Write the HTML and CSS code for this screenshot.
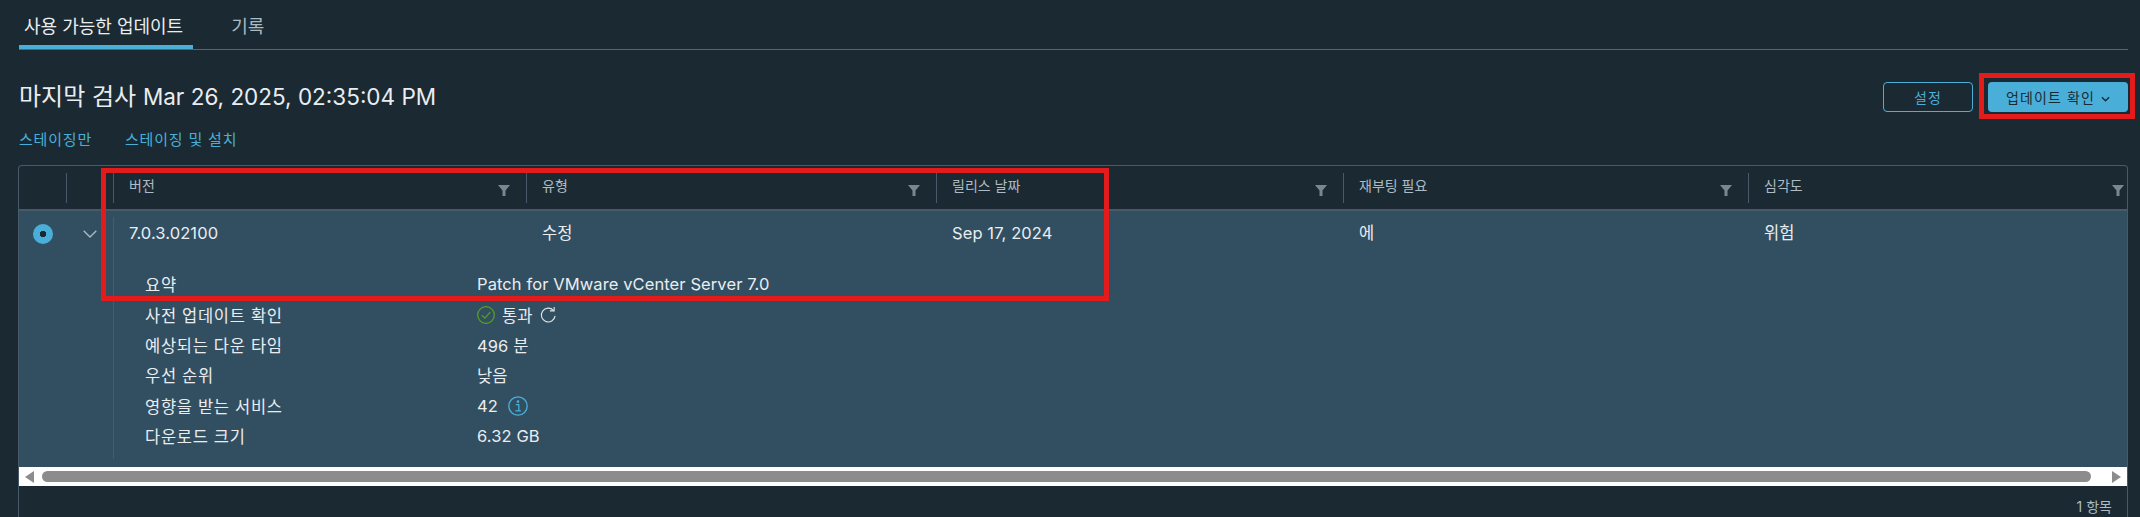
FILE: index.html
```html
<!DOCTYPE html>
<html lang="ko">
<head>
    <meta charset="UTF-8">
    <meta name="viewport" content="width=device-width, initial-scale=1.0">
    <title>사용 가능한 업데이트</title>
    <link rel="stylesheet" href="styles.css">
</head>
<body>
    <nav class="tabs">
        <a class="tab active">사용 가능한 업데이트</a>
        <a class="tab">기록</a>
    </nav>

    <div class="title-row">
        <h1 class="title">마지막 검사 <span class="title-date">Mar 26, 2025, 02:35:04 PM</span></h1>
        <div class="actions">
            <button type="button" class="btn btn-outline">설정</button>
            <button type="button" class="btn btn-primary">업데이트 확인
                <svg class="btn-caret" viewBox="0 0 10 6" width="9" height="6"><path d="M1 1l4 4 4-4" fill="none" stroke="#1b2a32" stroke-width="1.5"/></svg>
            </button>
        </div>
    </div>

    <div class="links">
        <a>스테이징만</a>
        <a>스테이징 및 설치</a>
    </div>

    <div class="grid">
        <div class="grid-head">
            <div class="head-cell head-radio"></div>
            <div class="head-cell head-expand"></div>
            <div class="head-cell col-a">버전<svg class="filter" viewBox="0 0 12 11"><path d="M0 0h12L7.5 5.5V11h-3V5.5z"/></svg></div>
            <div class="head-cell col-b">유형<svg class="filter" viewBox="0 0 12 11"><path d="M0 0h12L7.5 5.5V11h-3V5.5z"/></svg></div>
            <div class="head-cell col-c">릴리스 날짜<svg class="filter" viewBox="0 0 12 11"><path d="M0 0h12L7.5 5.5V11h-3V5.5z"/></svg></div>
            <div class="head-cell col-d">재부팅 필요<svg class="filter" viewBox="0 0 12 11"><path d="M0 0h12L7.5 5.5V11h-3V5.5z"/></svg></div>
            <div class="head-cell col-e">심각도<svg class="filter" viewBox="0 0 12 11"><path d="M0 0h12L7.5 5.5V11h-3V5.5z"/></svg></div>
        </div>

        <div class="grid-row">
            <div class="row-radio"><span class="radio"></span></div>
            <div class="row-expand">
                <svg viewBox="0 0 14 8" width="14" height="8"><path d="M.7.7L7 7l6.300-6.300" fill="none" stroke="#adbbc4" stroke-width="1.300"/></svg>
            </div>
            <div class="row-body">
                <div class="row-main">
                    <div class="cell col-a">7.0.3.02100</div>
                    <div class="cell col-b">수정</div>
                    <div class="cell col-c">Sep 17, 2024</div>
                    <div class="cell col-d">에</div>
                    <div class="cell col-e">위험</div>
                </div>
                <dl class="details">
                    <dt>요약</dt>
                    <dd>Patch for VMware vCenter Server 7.0</dd>
                    <dt>사전 업데이트 확인</dt>
                    <dd>
                        <svg class="ico" viewBox="0 0 18 18" width="18" height="18"><circle cx="9" cy="9" r="8.300" fill="none" stroke="#5aa220" stroke-width="1.200"/><path d="M4.800 9.200l3 3 5.500-6" fill="none" stroke="#5aa220" stroke-width="1.100"/></svg>
                        <span class="pass">통과</span>
                        <svg class="ico" viewBox="0 0 18 18" width="17" height="18"><path d="M14.200 4.200A7.300 7.300 0 1 0 16 10" fill="none" stroke="#dfe5e8" stroke-width="1.200"/><path d="M10.500 4.700h4.500V.500" fill="none" stroke="#dfe5e8" stroke-width="1.200"/></svg>
                    </dd>
                    <dt>예상되는 다운 타임</dt>
                    <dd>496 분</dd>
                    <dt>우선 순위</dt>
                    <dd>낮음</dd>
                    <dt>영향을 받는 서비스</dt>
                    <dd>42
                        <svg class="ico ico-info" viewBox="0 0 20 20" width="20" height="20"><circle cx="10" cy="10" r="9.200" fill="none" stroke="#49afd9" stroke-width="1.300"/><circle cx="10" cy="5.600" r="1.300" fill="#49afd9"/><path d="M7.800 8.700h3v6M7.300 14.900h5.600" fill="none" stroke="#49afd9" stroke-width="1.300"/></svg>
                    </dd>
                    <dt>다운로드 크기</dt>
                    <dd>6.32 GB</dd>
                </dl>
            </div>
        </div>

        <div class="scrollbar">
            <svg viewBox="0 0 9 12" width="9" height="12"><path d="M9 0v12L0 6z" fill="#8c8c8c"/></svg>
            <div class="thumb"></div>
            <svg viewBox="0 0 9 12" width="9" height="12"><path d="M0 0v12l9-6z" fill="#8c8c8c"/></svg>
        </div>

        <div class="grid-foot">1 항목</div>
    </div>

    <!-- annotation boxes -->
    <div class="mark mark-table"></div>
    <div class="mark mark-button"></div>
</body>
</html>
```

FILE: styles.css
```css
* {
    margin: 0;
    padding: 0;
    box-sizing: border-box;
}

body {
    position: relative;
    height: 517px;
    overflow: hidden;
    padding: 0 12px 0 18px;
    display: flex;
    flex-direction: column;
    background-color: #1b2a32;
    color: #eaedf0;
    font-family: Inter, "Noto Sans CJK KR", sans-serif;
    font-size: 16.5px;
}

/* tabs */
.tabs {
    display: flex;
    gap: 33px;
    height: 50px;
    margin-left: 1px;
    border-bottom: 1px solid #566570;
    flex-shrink: 0;
}
.tab {
    padding: 13px 10px 0 5px;
    height: 49px;
    font-size: 18px;
    line-height: 28px;
    color: #acbac3;
}
.tab.active {
    color: #eaedf0;
    border-bottom: 4px solid #49afd9;
}

/* title */
.title-row {
    display: flex;
    justify-content: space-between;
    align-items: center;
    height: 30px;
    margin-top: 32px;
}
.title {
    margin-left: 1px;
    font-size: 24px;
    font-weight: 400;
    line-height: 30px;
    white-space: nowrap;
}
.title-date {
    font-size: 22.5px;
}
.actions {
    display: flex;
    gap: 15px;
}
.btn {
    height: 30px;
    border-radius: 4px;
    font-family: inherit;
    font-size: 14px;
    letter-spacing: 1.100px;
}
.btn-outline {
    width: 90px;
    background: transparent;
    border: 1px solid #49afd9;
    color: #49afd9;
}
.btn-primary {
    width: 140px;
    background: #49afd9;
    border: none;
    color: #1b2a32;
}
.btn-caret {
    margin-left: 1px;
    vertical-align: 1px;
}

.links {
    display: flex;
    gap: 33px;
    height: 20px;
    margin: 18px 0 15px 1px;
    font-size: 15px;
    line-height: 20px;
    letter-spacing: 0.8px;
    color: #49afd9;
}

/* datagrid */
.grid {
    flex: 1;
    min-height: 0;
    display: flex;
    flex-direction: column;
    border: 1px solid #485969;
    border-bottom: none;
    border-radius: 4px 4px 0 0;
}
.grid-head {
    display: flex;
    height: 45px;
    padding: 7px 0 8px;
    border-bottom: 2px solid #485969;
    flex-shrink: 0;
}
.head-cell {
    display: flex;
    align-items: flex-start;
    justify-content: space-between;
    padding: 3px 3px 0 15px;
    font-size: 14px;
    line-height: 20px;
    color: #adbbc4;
    border-left: 1px solid #485969;
    height: 30px;
}
.head-radio {
    width: 47px;
    border-left: none;
}
.head-expand {
    width: 47px;
}
.col-a { width: 413px; }
.col-b { width: 410px; }
.col-c { width: 407px; }
.col-d { width: 405px; }
.col-e { width: 379px; }
.filter {
    width: 12px;
    height: 11px;
    margin-top: 9px;
    margin-right: 13px;
    fill: #7b8790;
}
.col-e .filter {
    margin-right: 0;
}

.grid-row {
    display: flex;
    height: 256px;
    background-color: #324f62;
    flex-shrink: 0;
}
.row-radio,
.row-expand {
    width: 47px;
    display: flex;
    padding-top: 13px;
    align-items: flex-start;
    justify-content: center;
}
.row-expand {
    padding-top: 19px;
}
.radio {
    width: 20px;
    height: 20px;
    border-radius: 50%;
    background: radial-gradient(circle, #1b2a32 0 3px, #49afd9 3.5px);
}
.row-body {
    flex: 1;
    margin: 6px 0 8px;
    border-left: 1px solid #435b6c;
}
.row-main {
    display: flex;
    height: 32px;
    line-height: 32px;
    margin-left: -1px;
    letter-spacing: 0.1px;
}
.row-main .cell {
    padding-left: 16px;
}
.details {
    display: grid;
    grid-template-columns: 332px 1fr;
    grid-auto-rows: 30.4px;
    align-items: center;
    margin: 20px 0 0 31px;
}
.details dt {
    letter-spacing: 0.7px;
}
.details dd {
    display: flex;
    align-items: center;
    letter-spacing: 0.1px;
}
.pass {
    margin: 0 7px 0 7px;
}
.ico {
    flex-shrink: 0;
}
.ico-info {
    margin-left: 10px;
}

.scrollbar {
    display: flex;
    align-items: center;
    height: 19px;
    padding: 0 6px;
    background: #fff;
    flex-shrink: 0;
}
.thumb {
    flex: 1;
    height: 11px;
    margin: 0 21px 0 8px;
    border-radius: 6px;
    background: #8c8c8c;
}

.grid-foot {
    padding: 12px 15px 0 0;
    text-align: right;
    font-size: 14px;
    line-height: 18px;
    color: #adbbc4;
}

/* red annotation boxes drawn over the screenshot */
.mark {
    position: absolute;
    border: 5px solid #e41b1b;
}
.mark-table {
    left: 101px;
    top: 168px;
    width: 1008px;
    height: 133px;
}
.mark-button {
    left: 1979px;
    top: 73px;
    width: 156px;
    height: 46px;
}
```
